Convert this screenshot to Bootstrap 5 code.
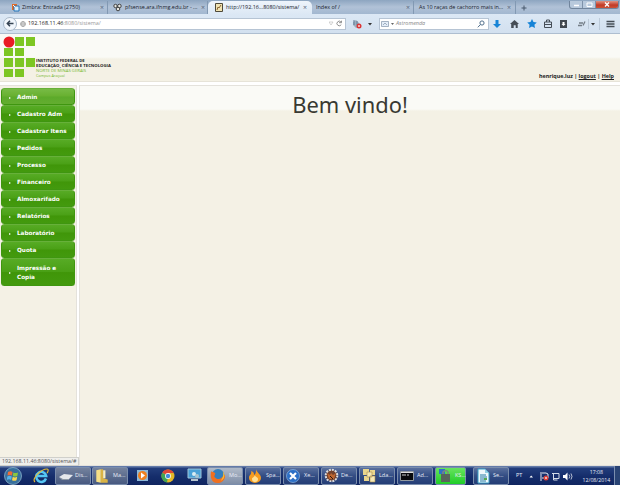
<!DOCTYPE html>
<html lang="pt-BR">
<head>
<meta charset="utf-8">
<title>Sistema</title>
<link href="https://cdn.jsdelivr.net/npm/bootstrap@5.3.0/dist/css/bootstrap.min.css" rel="stylesheet">
<style>
body{width:620px;height:485px;overflow:hidden;font-family:"Open Sans","Noto Sans",sans-serif;font-size:5.45px;line-height:1;color:#222;background:#fff}
svg{display:block;flex:none}
.tabs{height:14px;background:linear-gradient(#8da5c0,#b1c2d7 50%,#a2b7d0);padding-top:1px}
.tab{height:13px;color:#17202b;padding:0 3px 0 11px;border-right:1px solid #8299b3;white-space:nowrap;flex:none}
.tab.on{background:linear-gradient(#eef4fb,#dce8f5);border-radius:5px 5px 0 0;padding-left:7px;padding-right:5px;border:0}
.tab .x{margin-left:auto;color:#59687a;font-size:7px}
.wins{width:50px;height:8px;margin-left:auto;margin-right:1px;border:1px solid #71859d;border-top:0;border-radius:0 0 3px 3px;background:#b8c9dc;overflow:hidden}
.wins span{width:13px;height:8px;border-right:1px solid #7d91a9}
.wins span:last-child{flex:1;background:linear-gradient(#df9382,#c23a26 50%,#cf5a3c);border:0}
.tools{height:20px;background:linear-gradient(#dce8f5,#d2e0ef);border-bottom:1px solid #aebed0;padding-left:3px}
.back{width:14px;height:14px;border:1px solid #a7b7c8;border-radius:50%;background:#f1f6fc;z-index:1}
.addr{width:332px;height:12px;margin-left:-3px;padding-left:5px;padding-right:2px;border:1px solid #b6c4d4;background:#fff;color:#999}
.addr b{color:#222;font-weight:400}
.find{width:110px;height:12px;border:1px solid #b6c4d4;background:#fff;color:#888;padding:0 3px 0 1px}
.find i{margin-left:1px}
.head{height:48px;background:linear-gradient(#fafaf6 0 23px,#f4f1e5 25px);border-bottom:1px solid #e6e3d8;padding:2px 6px 0 3px}
.brand{font-size:4.25px;line-height:5px;font-weight:700;margin:22px 0 0 1px;white-space:nowrap}
.brand div:nth-child(n+3){color:#75b72f;font-weight:400}
.brand .campus{font-size:3.8px}
.user{font-size:5.4px;font-weight:700;margin:38px 0 0 auto;white-space:nowrap}
.user a{color:#222}
.main{height:384px;padding-top:3px}
.side{width:77px;background:#f4f1e5;border:1px solid #e4e2dc;border-left:0;padding:2px 1px;flex:none}
.menu-link{width:74px;height:17px;border:1px solid #3f9610;border-top-color:#67b03a;border-radius:3.5px;background:linear-gradient(#57ab25,#4aa016 48%,#409609 52%,#439a0e);color:#fff;font-family:"DejaVu Sans","Noto Sans",sans-serif;font-size:5.7px;line-height:9.5px;font-weight:700;text-decoration:none;padding:2px 0 0 7px}
.menu-link:first-child{background:linear-gradient(#77bb45,#68b030 48%,#5caa2a 52%,#63ad30)}
.menu-link:last-child{height:28px}
.menu-link i{width:0;height:0;border:1.7px solid transparent;border-left:2px solid #fff;border-right:0;margin-right:6px}
.content{background:linear-gradient(#fafaf6 0 23px,#f4f1e5 25px);border:1px solid #e4e2dc;border-right:0;margin-left:2px;text-align:center}
.content h1{font-family:"Noto Sans",sans-serif;font-size:21.9px;line-height:20px;font-weight:400;color:#393932;margin:9px 0 0 0}
.status{left:0;bottom:19px;width:79px;height:9px;background:#efefec;border:1px solid #d0d0cb;border-left:0;color:#555;padding:1px 1px 1px 2px;font-size:5.3px;white-space:nowrap}
.taskbar{height:19px;background:linear-gradient(#637ba9 0 1px,#233e7c 2px,#152d6b 55%,#102560);color:#e8edf8;font-size:5.5px}
.task{width:36px;height:18px;border:1px solid #7a8dac;border-radius:2px;background:linear-gradient(#596f9d,#334d84 50%,#243d76);margin-right:2px;padding-left:2px;flex:none;white-space:nowrap}
.task.lit{background:linear-gradient(#b0bac8,#7e8da6)}
.task.soft{background:linear-gradient(#74829d,#475980);margin-right:1px}
.task.green{background:linear-gradient(#68e35e,#20cd28);width:31px;margin-right:7px}
.launch{width:26px;flex:none}
.clock{font-size:5.2px;line-height:8px;text-align:center;width:32px;margin-left:4px}
.show{width:6px;height:19px;border-left:1px solid #7b8eaf;background:#294374}
</style>
<script src="https://cdn.jsdelivr.net/npm/bootstrap@5.3.0/dist/js/bootstrap.bundle.min.js"></script>
</head>
<body class="d-flex flex-column position-relative">
<div class="tabs d-flex">
  <div class="tab d-flex align-items-center" style="width:108px">
    <svg width="9" height="9" viewBox="0 0 9 9" class="me-1"><path d="M1 1h5v6H1z" fill="#e56b24"/><path d="M3 3h5v5H3z" fill="#d9edf9" stroke="#2372b8"/><path d="M2 2l2 2" stroke="#fff"/></svg>
    <span style="margin-left:-2px">Zimbra: Entrada (2750)</span><span class="x">×</span></div>
  <div class="tab d-flex align-items-center" style="width:100px;padding-left:5px;padding-right:2px">
    <svg width="9" height="9" viewBox="0 0 9 9" style="margin-right:3px"><g fill="#e7e7e2" stroke="#333" stroke-width=".9"><circle cx="2.5" cy="3" r="1.7"/><circle cx="6.4" cy="3" r="1.8"/><circle cx="5" cy="6" r="1.8"/></g></svg>
    <span>pfsense.ara.ifnmg.edu.br - ...</span><span class="x">×</span></div>
  <div class="tab on d-flex align-items-center" style="width:104px">
    <svg width="8" height="9" viewBox="0 0 8 9" style="margin-right:3px"><path d="M.5.5h7v8h-7z" fill="#f1e3b2" stroke="#4e4939"/><path d="M2 7l1-3 1 1 2-3" fill="none" stroke="#8a6635"/></svg>
    <span>http://192.16...8080/sistema/</span><span class="x">×</span></div>
  <div class="tab d-flex align-items-center" style="width:102px;padding-left:4px"><span>Index of /</span><span class="x">×</span></div>
  <div class="tab d-flex align-items-center" style="width:102px;padding-left:5px;padding-right:4px"><span>As 10 raças de cachorro mais in...</span><span class="x">×</span></div>
  <div class="d-flex align-items-center" style="padding-left:5px"><svg width="6" height="6" viewBox="0 0 6 6"><path d="M3 .5v5M.5 3h5" stroke="#46566a"/></svg></div>
  <div class="wins d-flex">
    <span><svg width="12" height="8" viewBox="0 0 12 8"><path d="M4 4.500h5" stroke="#fff" stroke-width="1.500"/></svg></span>
    <span><svg width="12" height="8" viewBox="0 0 12 8"><path d="M4 2h5v3.500H4z" fill="none" stroke="#fff"/></svg></span>
    <span><svg width="22" height="8" viewBox="0 0 22 8"><path d="M9 1.500l4 4m0-4l-4 4" stroke="#fff" stroke-width="1.300"/></svg></span>
  </div>
</div>
<div class="tools d-flex align-items-center">
  <div class="back d-flex align-items-center justify-content-center"><svg width="8" height="7" viewBox="0 0 8 7"><path d="M4 .7L1.3 3.5 4 6.3M1.5 3.5h6" fill="none" stroke="#364453" stroke-width="1.5"/></svg></div>
  <div class="addr d-flex align-items-center">
    <svg width="6" height="6" viewBox="0 0 6 6" style="margin-right:2px"><g fill="none" stroke="#888" stroke-width=".6"><circle cx="3" cy="3" r="2.5"/><ellipse cx="3" cy="3" rx="1.2" ry="2.5"/><path d="M.5 3h5"/></g></svg>
    <span><b>192.168.11.46</b>:8080/sistema/</span>
    <svg class="ms-auto" width="14" height="7" viewBox="0 0 14 7"><path d="M0 2h4L2 5z" fill="none" stroke="#aaa" stroke-width=".5"/><path d="M12 2a2.3 2.3 0 1 0 .3 2.5M12.5.7v2H10" fill="none" stroke="#777" stroke-width=".8"/></svg>
  </div>
  <svg width="33" height="12" viewBox="0 0 33 12"><path d="M7 4l3-2 3 3 2 4-5 1-3-3z" fill="#9baebe"/><path d="M8 2v5m3-4v4" stroke="#657f98"/><circle cx="13" cy="8" r="2.500" fill="#dc3434"/><path d="M12 7l2 2m0-2l-2 2" stroke="#fff" stroke-width=".6"/><path d="M22 5h4l-2 2.500z" fill="#333"/></svg>
  <div class="find d-flex align-items-center"><svg width="14" height="6" viewBox="0 0 14 6"><path d="M.5.5h7v5h-7zM2 4l2-2 2 2" fill="#e3edf8" stroke="#8295ab" stroke-width=".7"/><path d="M10 2h3l-1.500 2z" fill="#666"/></svg><i>Astromenda</i><svg class="ms-auto" width="8" height="8" viewBox="0 0 8 8"><circle cx="5" cy="3" r="2.1" fill="none" stroke="#516f8c"/><path d="M3.5 4.500L.8 7.300" stroke="#516f8c"/></svg></div>
  <svg width="131" height="16" viewBox="0 0 131 16">
    <path d="M6.500 4h3v4H12l-4 4-4-4h2.500z" fill="#1683d6"/>
    <path d="M21 8l4.500-4L30 8h-1.300v4h-2V9.200h-2V12h-2.500V8z" fill="#454d56"/>
    <path d="M43 3l1.500 3 3.300.4-2.400 2.300.6 3.400-3-1.600-3 1.600.6-3.400L38.200 6.400 41.500 6z" fill="#1683d6"/>
    <path d="M55.500 6h7v5.500h-7zM57.500 6V4h3v2M55.500 8.500h7" fill="none" stroke="#454d56"/>
    <path d="M71 4h7v8h-7z" fill="#3f464e"/><path d="M73.500 6h2v2h1l-2 2-2-2h1z" fill="#fff"/>
    <path d="M89 9.500h4M90 7h4m0 2.500l2-4" fill="none" stroke="#747d87" stroke-width="1.300"/>
    <path d="M99.500 3v10M110.500 2v12" stroke="#b0bfce" stroke-width=".7"/><path d="M102 7h4l-2 2.500z" fill="#333"/>
    <path d="M117.500 5.500h8m-8 2.500h8m-8 2.500h8" stroke="#454d56" stroke-width="1.400"/>
  </svg>
</div>
<div class="head d-flex">
  <svg width="32" height="43" viewBox="0 0 32 43"><g fill="#7dc623"><path d="M12 1h9v9h-9zM23 1h9v9h-9zM1 12h9v8H1zM12 12h9v8h-9zM1 22h9v9H1zM12 22h9v9h-9zM23 22h9v9h-9zM1 33h9v8H1zM12 33h9v8h-9z"/></g><circle cx="6" cy="6" r="5.500" fill="#e91b24"/></svg>
  <div class="brand"><div>INSTITUTO FEDERAL DE</div><div>EDUCAÇÃO, CIÊNCIA E TECNOLOGIA</div><div>NORTE DE MINAS GERAIS</div><div class="campus">Campus Araçuaí</div></div>
  <div class="user">henrique.luz | <a href="#">logout</a> | <a href="#">Help</a></div>
</div>
<div class="main d-flex">
  <nav class="side d-flex flex-column">
    <a href="#" class="menu-link d-flex align-items-center"><i></i>Admin</a>
    <a href="#" class="menu-link d-flex align-items-center"><i></i>Cadastro Adm</a>
    <a href="#" class="menu-link d-flex align-items-center"><i></i>Cadastrar Itens</a>
    <a href="#" class="menu-link d-flex align-items-center"><i></i>Pedidos</a>
    <a href="#" class="menu-link d-flex align-items-center"><i></i>Processo</a>
    <a href="#" class="menu-link d-flex align-items-center"><i></i>Financeiro</a>
    <a href="#" class="menu-link d-flex align-items-center"><i></i>Almoxarifado</a>
    <a href="#" class="menu-link d-flex align-items-center"><i></i>Relatórios</a>
    <a href="#" class="menu-link d-flex align-items-center"><i></i>Laboratório</a>
    <a href="#" class="menu-link d-flex align-items-center"><i></i>Quota</a>
    <a href="#" class="menu-link d-flex align-items-center"><i></i><span>Impressão e<br>Copia</span></a>
  </nav>
  <main class="content flex-grow-1"><h1>Bem vindo!</h1></main>
</div>
<div class="status position-absolute">192.168.11.46:8080/sistema/#</div>
<footer class="taskbar d-flex align-items-center">
  <div class="launch d-flex justify-content-center"><svg width="18" height="18" viewBox="0 0 18 18"><circle cx="9" cy="9" r="8.500" fill="#376f9c" stroke="#9bc1d7" stroke-width=".7"/><path d="M4 5q2.500-1.500 4.500 0L8 8.500q-2-1.200-4.500 0z" fill="#ef6c35"/><path d="M9.300 5.400q2 1.400 4.700 0l-.7 3.500q-2.300 1.100-4.500 0z" fill="#8bc63d"/><path d="M3.300 9.400q2.400-1.300 4.500 0l-.7 3.500q-2-1.300-4.300 0z" fill="#56b3e9"/><path d="M8.700 9.800q2.200 1.200 4.500 0l-.7 3.400q-2 1.200-4.500 0z" fill="#f7d650"/></svg></div>
  <div class="launch d-flex justify-content-center" style="width:29px"><svg width="16" height="16" viewBox="0 0 16 16"><path d="M13 10.500A5 5 0 1 1 13.200 8H4" fill="none" stroke="#55c7f4" stroke-width="2.500"/><path d="M2 14C-2 11 8 1 14 1c2 0 1 3 0 4" fill="none" stroke="#e9bd35" stroke-width="1.100"/></svg></div>
  <div class="task soft d-flex align-items-center"><svg width="16" height="12" viewBox="0 0 16 12"><path d="M1 7l5-3 9 1-4 4H4z" fill="#e5e8eb"/><path d="M1 7l4 2h6v1H4z" fill="#8d99a4"/></svg><span style="padding-left:1px">Dis...</span></div>
  <div class="task soft d-flex align-items-center"><svg width="14" height="16" viewBox="0 0 12 14"><path d="M1 2l4-1v12l-4-1z" fill="#f6df86"/><path d="M5 1h2v8l4 1v3H5z" fill="#d9b345"/><path d="M7 2h2v7H7z" fill="#f9eec1"/></svg><span class="ps-1">Ma...</span></div>
  <div class="launch d-flex justify-content-center"><svg width="13" height="13" viewBox="0 0 13 13"><path d="M1 1h11v11H1z" fill="#8db9d9"/><circle cx="6.500" cy="6.500" r="4.500" fill="#ee8120"/><path d="M5 3.500l4 3-4 3z" fill="#fff"/></svg></div>
  <div class="launch d-flex justify-content-center"><svg width="14" height="14" viewBox="0 0 14 14"><circle cx="7" cy="7" r="6.500" fill="#e4b827"/><path d="M7 7L1.300 3.700A6.500 6.500 0 0 1 12.700 4H7z" fill="#de4737"/><path d="M7 7l-1 6.400A6.500 6.500 0 0 1 1.300 3.700z" fill="#41a454"/><circle cx="7" cy="7" r="2.900" fill="#fff"/><circle cx="7" cy="7" r="2.200" fill="#458bdb"/></svg></div>
  <div class="launch d-flex justify-content-center"><svg width="15" height="15" viewBox="0 0 15 15"><path d="M1 1h13v9H1z" fill="#4aa1d7" stroke="#a0c6d9"/><path d="M4 11h7v2H4z" fill="#b6c5cf"/><circle cx="7" cy="6" r="2" fill="#d9edf4"/><circle cx="10" cy="8" r="2" fill="#a6c3d1"/></svg></div>
  <div class="task lit d-flex align-items-center"><svg width="16" height="16" viewBox="0 0 15 15"><circle cx="7.500" cy="7" r="6" fill="#347fbd"/><path d="M1 3c1 1 2 0 4 2L4 8c2 3 5 3 7 1l3-3c1 5-3 8-7 8C1 14 0 8 1 3z" fill="#ef7020"/><path d="M12 3c3 4 1 8-2 9 2-3 3-5 2-9z" fill="#f5bd34"/></svg><span style="padding-left:3px">Mo...</span></div>
  <div class="task d-flex align-items-center"><svg width="14" height="15" viewBox="0 0 14 15"><path d="M8 1c0 3 5 5 5 9a6 5 0 0 1-12 0c0-4 3-3 2-7 3 1 3 2 3 4 2-1 2-3 2-6z" fill="#f59c20"/><path d="M7 7c0 2 3 2 3 4a3 3 0 0 1-6 0c0-2 2-1 3-4z" fill="#ffe196"/></svg><span class="ps-1">Spa...</span></div>
  <div class="task d-flex align-items-center"><svg width="14" height="14" viewBox="0 0 14 14"><circle cx="7" cy="7" r="6.500" fill="#2c6fc5" stroke="#9ec5ed" stroke-width=".6"/><path d="M4 4l6 6m0-6l-6 6" stroke="#fff" stroke-width="2.200"/></svg><span class="ps-1">Xe...</span></div>
  <div class="task d-flex align-items-center"><svg width="15" height="15" viewBox="0 0 15 15"><circle cx="7.500" cy="7.500" r="5.800" fill="#71412d" stroke="#ddd" stroke-width="2" stroke-dasharray="2 1"/><path d="M3 5l3 2 1-2 2 2 3-2-2 6H5z" fill="#bc652f"/><path d="M6 8l3 3" stroke="#291711"/></svg><span style="padding-left:2px">De...</span></div>
  <div class="task d-flex align-items-center"><svg width="14" height="15" viewBox="0 0 14 15"><path d="M1 1h6v6H1zM8 2h5v5H8zM2 8h5v5H2z" fill="#e8d58d"/><path d="M5 4h5v5H5zM8 8h5v6H8z" fill="#f4e8b6" stroke="#aa8c46" stroke-width=".6"/></svg><span style="padding-left:3px">Lda...</span></div>
  <div class="task d-flex align-items-center"><svg width="14" height="10" viewBox="0 0 14 10"><path d="M.5.500h13v9H.5z" fill="#080a0c" stroke="#929aa0"/><path d="M1 1.500h12" stroke="#ddd"/><path d="M2 4h4m1 0h2" stroke="#fff" stroke-width=".8"/></svg><span style="padding-left:3px">Ad...</span></div>
  <div class="task green d-flex align-items-center"><svg width="14" height="15" viewBox="0 0 14 15"><path d="M1 1h6v5H1z" fill="#2f72c4"/><path d="M5 6V4q3-3 5 0v2" fill="none" stroke="#81867c" stroke-width="1.500"/><path d="M3 6h9v8H3z" fill="#58665a"/></svg><span style="padding-left:3px">KS...</span></div>
  <div class="task d-flex align-items-center"><svg width="14" height="16" viewBox="0 0 14 16"><path d="M2 1h7l4 4v10H2z" fill="#eef7fb" stroke="#399fc5"/><path d="M9 1v4h4" fill="#94cde2"/><path d="M4 7h6M4 9h7M4 11h4M4 13h6" stroke="#267da5"/><path d="M8 10h3v2H8z" fill="#56a953"/></svg><span style="padding-left:3px">Se...</span></div>
  <span style="margin-left:5px">PT</span>
  <svg width="50" height="14" viewBox="0 0 50 14" class="ms-1"><path d="M3.500 8.500h3.500L5.200 6.500z" fill="#fff"/><path d="M15 3v9m1-8h4l2 1v4h-6" fill="none" stroke="#e4e8f0"/><circle cx="20" cy="9" r="2.500" fill="#dd3f38"/><path d="M19 8l2 2m0-2l-2 2" stroke="#fff" stroke-width=".6"/><path d="M26 4.500h7v5h-5M27.500 4v7h4" fill="none" stroke="#d2dbe8"/><path d="M37 6h2l2.500-2.500v8L39 9h-2z" fill="#fff"/><path d="M43 5.500q1.500 2 0 4m2-5q2 3 0 6" fill="none" stroke="#fff" stroke-width=".7"/></svg>
  <div class="clock">17:08<br>12/08/2014</div>
  <div class="show ms-auto"></div>
</footer>
</body>
</html>
